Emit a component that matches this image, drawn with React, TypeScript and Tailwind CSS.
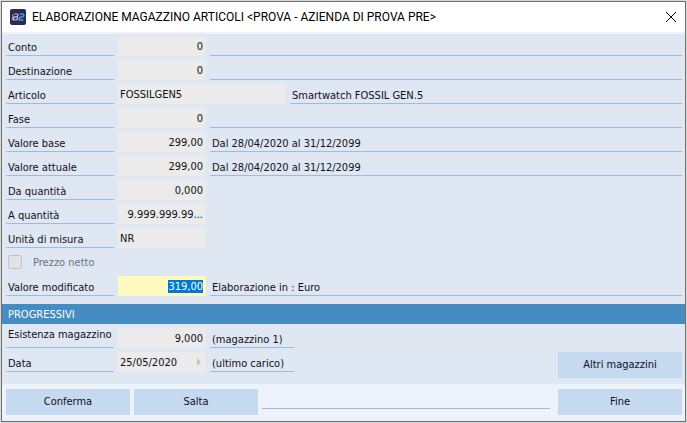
import { useEffect, useRef, type ReactNode } from "react";

type FieldProps = {
  id: string;
  label: string;
  value: string;
  align?: "left" | "right";
  wide?: boolean;
  labelTop?: boolean;
  children?: ReactNode;
};

function FieldLabel({ id, top, children }: { id: string; top?: boolean; children: ReactNode }) {
  return (
    <label
      htmlFor={id}
      className={`flex h-5 w-[108px] shrink-0 border-b border-[#a3b9da] pl-0.5 whitespace-nowrap ${
        top ? "items-start" : "items-end"
      }`}
    >
      {children}
    </label>
  );
}

function Note({ short, children }: { short?: boolean; children?: ReactNode }) {
  return (
    <div
      className={`flex h-5 items-end border-b border-[#a3b9da] pl-0.5 whitespace-nowrap ${
        short ? "w-21" : "flex-1"
      }`}
    >
      {children}
    </div>
  );
}

function Field({ id, label, value, align = "right", wide, labelTop, children }: FieldProps) {
  return (
    <div className="flex gap-1">
      <FieldLabel id={id} top={labelTop}>
        {label}
      </FieldLabel>
      <input
        id={id}
        type="text"
        readOnly
        defaultValue={value}
        className={`h-5 shrink-0 bg-[#ebebeb] outline-none ${
          align === "right" ? "pr-[3px] text-right" : "pl-0.5 text-left"
        } ${wide ? "w-42" : "w-22"}`}
      />
      {children}
    </div>
  );
}

function ActionButton({ children }: { children: ReactNode }) {
  return (
    <button type="button" className="h-[26px] w-31 shrink-0 bg-[#c5d9f1] hover:bg-[#b4cdec]">
      {children}
    </button>
  );
}

function Logo() {
  return (
    <svg className="size-4" viewBox="0 0 16 16" fill="none" aria-hidden="true">
      <rect width="16" height="16" rx="2" fill="#2b2b52" />
      <g strokeWidth="1.2" strokeLinejoin="round">
        <path d="M3.2 5 2.2 11" stroke="#8f93ad" />
        <path
          d="M4.4 5h2.4q1.3 0 1.1 1.3T6.5 7.9H3.9M6.5 7.9q1.3.1 1.1 1.5T6.1 11H3.4L3.9 7.9"
          stroke="#c6cadc"
        />
        <path
          d="M9.6 5h3.1q1.3 0 1.1 1.4T12.4 7.9h-1.6q-1.1 0-1.3 1.2L9.2 11h4.2"
          stroke="#3aa0e8"
          strokeWidth="1.5"
        />
      </g>
    </svg>
  );
}

export default function App() {
  const modified = useRef<HTMLInputElement>(null);

  useEffect(() => {
    modified.current?.focus();
    modified.current?.select();
  }, []);

  return (
    <div className="bg-[#d9d9d6] p-px font-['DejaVu_Sans_Condensed','DejaVu_Sans',sans-serif] text-[11px] leading-[14px] text-[#101018]">
      <div className="border border-[#6e6f70] bg-[#eef2fa]">
        {/* Title bar */}
        <header className="flex h-[30px] items-center bg-white px-2">
          <Logo />
          <h1 className="ml-1.5 flex-1 font-[Roboto,sans-serif] text-[12px] leading-4 whitespace-nowrap text-black">
            ELABORAZIONE MAGAZZINO ARTICOLI &lt;PROVA - AZIENDA DI PROVA PRE&gt;
          </h1>
          <button type="button" aria-label="Chiudi">
            <svg className="size-3" viewBox="0 0 12 12" stroke="#000" strokeWidth="1">
              <path d="M1 1l10 10M11 1 1 11" />
            </svg>
          </button>
        </header>

        {/* Item data */}
        <main className="mt-0.5 bg-[#dfe7f2]">
          <div className="flex flex-col gap-1 pt-0.5 pr-[3px] pb-2 pl-1">
            <Field id="conto" label="Conto" value="0">
              <Note />
            </Field>
            <Field id="destinazione" label="Destinazione" value="0">
              <Note />
            </Field>
            <Field id="articolo" label="Articolo" value="FOSSILGEN5" align="left" wide>
              <Note>Smartwatch FOSSIL GEN.5</Note>
            </Field>
            <Field id="fase" label="Fase" value="0">
              <Note />
            </Field>
            <Field id="valore-base" label="Valore base" value="299,00">
              <Note>Dal 28/04/2020 al 31/12/2099</Note>
            </Field>
            <Field id="valore-attuale" label="Valore attuale" value="299,00">
              <Note>Dal 28/04/2020 al 31/12/2099</Note>
            </Field>
            <Field id="da-quantita" label="Da quantità" value="0,000" />
            <Field id="a-quantita" label="A quantità" value="9.999.999.99..." />
            <Field id="unita" label="Unità di misura" value="NR" align="left" />
            <label className="flex h-5 items-center pl-0.5 text-[#6b7280]">
              <input
                type="checkbox"
                disabled
                className="size-3.5 appearance-none rounded-xs border border-[#c3c3c3] bg-[#e3e3e3]"
              />
              <span className="ml-[11px] pt-0.5">Prezzo netto</span>
            </label>
            <div className="flex gap-1">
              <FieldLabel id="valore-modificato">Valore modificato</FieldLabel>
              <input
                ref={modified}
                id="valore-modificato"
                type="text"
                defaultValue="319,00"
                className="h-5 w-22 shrink-0 bg-[#fffac0] pr-[3px] text-right outline-none selection:bg-[#0078d7] selection:text-white"
              />
              <Note>Elaborazione in : Euro</Note>
            </div>
          </div>

          {/* Totals */}
          <h2 className="flex h-5 items-center bg-[#448cc2] pt-0.5 pl-1.5 text-white">
            PROGRESSIVI
          </h2>
          <div className="flex justify-between pt-1 pr-[3px] pb-1.5 pl-1">
            <div className="flex flex-col gap-1">
              <Field id="esistenza" label="Esistenza magazzino" value="9,000" labelTop>
                <Note short>(magazzino 1)</Note>
              </Field>
              <div className="flex gap-1">
                <FieldLabel id="data">Data</FieldLabel>
                <div className="flex h-5 w-22 items-center bg-[#ebebeb]">
                  <input
                    id="data"
                    type="text"
                    readOnly
                    defaultValue="25/05/2020"
                    className="h-5 w-full min-w-0 pl-0.5 outline-none"
                  />
                  <button type="button" aria-label="Apri calendario" className="mr-1">
                    <svg className="h-2 w-1.5" viewBox="0 0 6 8" fill="#c2c2c6">
                      <path d="M1 0l4 4-4 4z" />
                    </svg>
                  </button>
                </div>
                <Note short>(ultimo carico)</Note>
              </div>
            </div>
            <div className="flex pt-6">
              <ActionButton>Altri magazzini</ActionButton>
            </div>
          </div>
        </main>

        {/* Actions */}
        <footer className="flex gap-1 pt-[5px] pr-[3px] pb-1.5 pl-1">
          <ActionButton>Conferma</ActionButton>
          <ActionButton>Salta</ActionButton>
          <div className="mr-1 flex h-5 flex-1 border-b border-[#a3b9da]" />
          <ActionButton>Fine</ActionButton>
        </footer>
      </div>
    </div>
  );
}
